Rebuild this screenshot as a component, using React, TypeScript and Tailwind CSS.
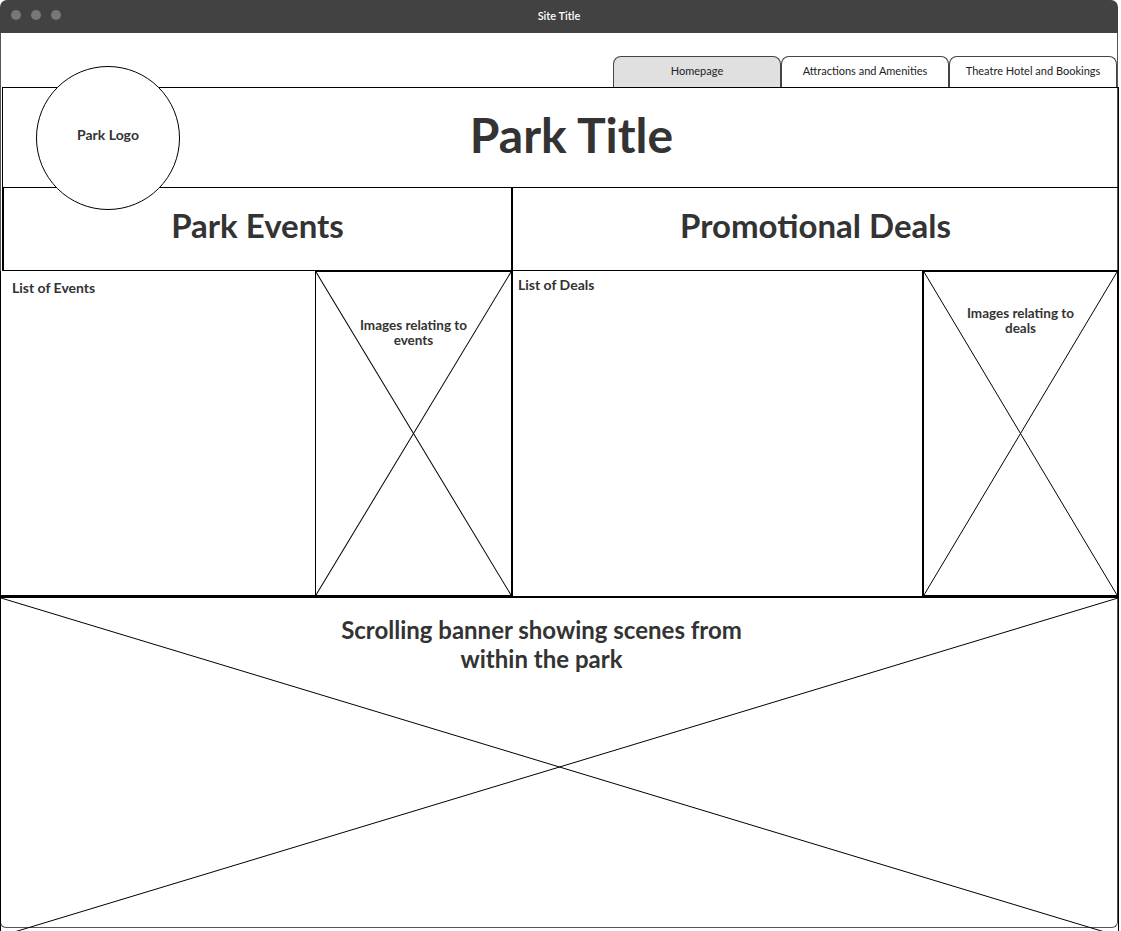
import { ReactNode } from "react";

const font = { fontFamily: '"Lato", "Liberation Sans", sans-serif' };

function Cross() {
  return (
    <svg
      className="pointer-events-none absolute inset-0 h-full w-full"
      viewBox="0 0 100 100"
      preserveAspectRatio="none"
    >
      <line x1="0" y1="0" x2="100" y2="100" stroke="#000" strokeWidth="1" vectorEffect="non-scaling-stroke" />
      <line x1="100" y1="0" x2="0" y2="100" stroke="#000" strokeWidth="1" vectorEffect="non-scaling-stroke" />
    </svg>
  );
}

function ImageBox({ children, className }: { children: ReactNode; className: string }) {
  return (
    <div className={`relative border border-black bg-white ${className}`}>
      <Cross />
      <p className="relative text-center text-[13.5px] font-bold leading-[15px] text-[#333]">{children}</p>
    </div>
  );
}

function Tab({ label, active }: { label: string; active?: boolean }) {
  return (
    <div
      className={`flex h-[31px] w-[168px] items-center justify-center rounded-t-[8px] border border-b-0 border-[#444] pb-[2px] text-[11px] text-[#222] ${
        active ? "bg-[#e0e0e0]" : "bg-white"
      }`}
    >
      {label}
    </div>
  );
}

export default function App() {
  return (
    <div className="h-[931px] w-[1121px] overflow-hidden bg-white" style={font}>
      <div className="w-[1118px]">
        <div className="relative flex h-[33px] items-center justify-center rounded-t-[7px] bg-[#424242]">
          <div className="absolute left-[11px] top-[10px] flex gap-[10px]">
            <span className="h-[10px] w-[10px] rounded-full bg-[#777]" />
            <span className="h-[10px] w-[10px] rounded-full bg-[#777]" />
            <span className="h-[10px] w-[10px] rounded-full bg-[#777]" />
          </div>
          <span className="text-[11px] font-semibold text-white">Site Title</span>
        </div>

        <div className="relative h-[895px] rounded-b-[6px] border-x border-b border-[#555]">
          <div className="flex h-[54px] items-end justify-end">
            <Tab label="Homepage" active />
            <Tab label="Attractions and Amenities" />
            <Tab label="Theatre Hotel and Bookings" />
          </div>

          <div className="ml-[1px] flex h-[101px] w-[1117px] items-center justify-center border border-black">
            <h1 className="mb-[6px] pl-[22px] text-[48px] font-bold text-[#333]">Park Title</h1>
          </div>

          <div className="ml-[1px] grid h-[83px] w-[1117px] grid-cols-[511px_1fr]">
            <div className="flex items-center justify-center border-x-2 border-b border-black">
              <h2 className="mb-[6px] text-[33px] font-bold text-[#333]">Park Events</h2>
            </div>
            <div className="flex items-center justify-center border-r border-b border-black">
              <h2 className="mb-[6px] text-[33px] font-bold text-[#333]">Promotional Deals</h2>
            </div>
          </div>

          <div className="ml-[-1px] grid h-[326px] w-[1119px] grid-cols-[316px_197px_409px_1fr]">
            <div className="border-x border-b-2 border-black px-[11px] pt-[6px]">
              <p className="text-[14px] font-bold text-[#333]">List of Events</p>
            </div>
            <ImageBox className="border-r-2 border-b-2 border-l-0 pt-[46px]">
              Images relating to
              <br />
              events
            </ImageBox>
            <div className="-mt-px border-b border-black px-[5px] pt-[4px]">
              <p className="text-[14px] font-bold text-[#333]">List of Deals</p>
            </div>
            <ImageBox className="-mt-px border-2 border-t-2 pt-[34px]">
              Images relating to
              <br />
              deals
            </ImageBox>
          </div>

          <div className="relative -ml-px h-[340px] w-[1119px] border border-black pt-[17px]">
            <Cross />
            <p className="relative pr-[36px] text-center text-[24px] font-bold leading-[29px] text-[#333]">
              Scrolling banner showing scenes from
              <br />
              within the park
            </p>
          </div>

          <div className="absolute left-[35px] top-[33px] flex h-[144px] w-[144px] items-center justify-center rounded-full border border-black bg-white">
            <span className="-mt-[8px] text-[14px] font-bold text-[#333]">Park Logo</span>
          </div>
        </div>
      </div>
    </div>
  );
}
